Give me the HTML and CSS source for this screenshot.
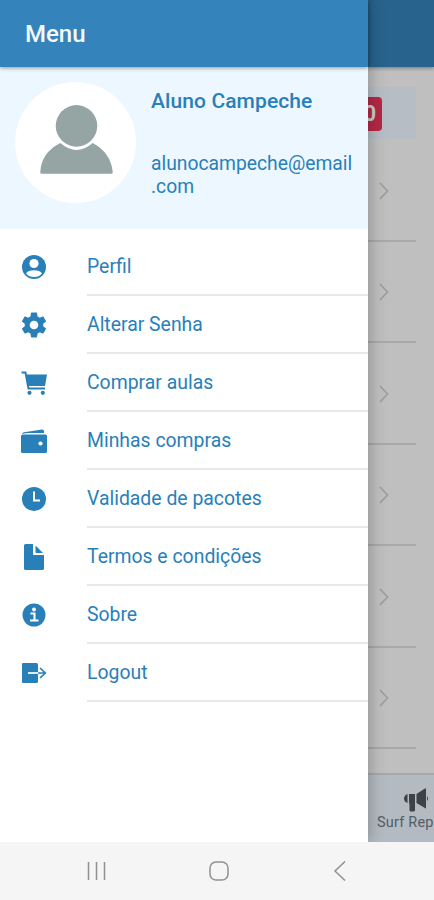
FILE: index.html
```html
<!DOCTYPE html>
<html lang="pt-BR">
  <head>
    <meta charset="UTF-8" />
    <meta name="viewport" content="width=device-width, initial-scale=1.0" />
    <title>Menu</title>
    <link rel="stylesheet" href="styles.css">
  </head>
  <body>
    <div class="app">
      <aside class="menu">
        <header class="toolbar"><h1>Menu</h1></header>
        <div class="profile">
          <svg class="avatar" viewBox="0 0 120 120">
            <circle cx="60" cy="60" r="60" fill="#fff" />
            <path d="M25 89.500Q26 70 45 60.500Q61 74.500 77 60.500Q95 70 97 89.500Q97 91 95 91H27Q25 91 25 89.500Z" />
            <circle cx="61" cy="43.500" r="22" fill="#fff" />
            <circle cx="61" cy="43.500" r="20.600" />
          </svg>
          <div class="user">
            <h2>Aluno Campeche</h2>
            <p>alunocampeche@email<br>.com</p>
          </div>
        </div>
        <ul>
          <li>
            <svg viewBox="0 0 26 26"><circle cx="13" cy="13" r="12" /><circle class="hole" cx="13" cy="9.500" r="4.600" /><path class="hole" d="M5 19.500Q7 16.200 13 16.200T21 19.500Q18 23 13 23T5 19.500Z" /></svg>
            <span>Perfil</span>
          </li>
          <li>
            <svg viewBox="1.500 1.500 21 21"><path d="M19.430 12.980c.040-.320.070-.640.070-.980s-.030-.660-.070-.980l2.110-1.650c.190-.150.240-.420.120-.640l-2-3.460c-.120-.220-.390-.300-.610-.220l-2.490 1c-.520-.400-1.080-.730-1.690-.980l-.380-2.650C14.460 2.180 14.250 2 14 2h-4c-.250 0-.460.180-.490.420l-.380 2.650c-.610.250-1.170.590-1.690.980l-2.490-1c-.230-.090-.490 0-.610.220l-2 3.460c-.130.220-.070.490.120.640l2.110 1.650c-.040.320-.070.650-.070.980s.030.660.070.980l-2.110 1.650c-.190.150-.240.420-.120.640l2 3.460c.120.220.390.300.610.220l2.490-1c.520.400 1.080.730 1.690.980l.380 2.650c.030.240.240.420.490.420h4c.250 0 .460-.180.490-.420l.380-2.650c.610-.250 1.170-.590 1.690-.980l2.490 1c.230.090.490 0 .610-.220l2-3.460c.120-.220.070-.490-.120-.640z" /><circle class="hole" cx="12" cy="12" r="3.500" /></svg>
            <span>Alterar Senha</span>
          </li>
          <li>
            <svg viewBox="0 0 26 26"><path d="M5 4.500H26L24 16H7Z" /><path class="line" d="M.5 2.500H4.500L7.500 18.500H24" /><circle cx="8.500" cy="22.800" r="2.100" /><circle cx="21.800" cy="22.800" r="2.100" /></svg>
            <span>Comprar aulas</span>
          </li>
          <li>
            <svg viewBox="0 0 26 26"><path d="M1 6Q1 4.700 3 4.300L21 1.500Q23 1.300 23 3V5H8Q4 5 1 6Z" /><path d="M2 6.500H24.500Q26 6.500 26 8V23.500Q26 25 24.500 25H1.500Q0 25 0 23.500V8Q0 6.800 2 6.500Z" /><circle class="hole" cx="19.500" cy="15.500" r="2.100" /></svg>
            <span>Minhas compras</span>
          </li>
          <li>
            <svg viewBox="0 0 26 26"><circle cx="13" cy="13" r="12" /><path class="line cut" d="M13 5.500V14.500H19" /></svg>
            <span>Validade de pacotes</span>
          </li>
          <li>
            <svg viewBox="0 0 26 26"><path d="M4.500 0H12V10Q12 11 13 11H23V24.500Q23 26 21.500 26H4.500Q3 26 3 24.500V1.500Q3 0 4.500 0Z" /><path d="M14.500 1.500V8Q14.500 9 15.500 9H22Z" /></svg>
            <span>Termos e condições</span>
          </li>
          <li>
            <svg viewBox="0 0 26 26"><circle cx="13" cy="13" r="11.500" /><circle class="hole" cx="13" cy="7.500" r="1.900" /><path class="line cut" d="M9.500 11.500H13.500V18.500M9 18.500H17.500" /></svg>
            <span>Sobre</span>
          </li>
          <li>
            <svg viewBox="0 0 26 26"><path d="M2 3H15.500Q17 3 17 4.500V21.500Q17 23 15.500 23H2Q1 23 1 22V4Q1 3 2 3Z" /><path class="line cut thin" d="M7 13H17" /><path class="line thin" d="M17 13H24M19 8L24.300 13L19 18" /></svg>
            <span>Logout</span>
          </li>
        </ul>
      </aside>

      <main class="page">
        <header class="toolbar"></header>
        <div class="balance"><b>0</b></div>
        <div class="rows">
          <div class="row"><svg viewBox="0 0 10 18"><path d="M1 1L8.500 9L1 17" /></svg></div>
          <div class="row"><svg viewBox="0 0 10 18"><path d="M1 1L8.500 9L1 17" /></svg></div>
          <div class="row"><svg viewBox="0 0 10 18"><path d="M1 1L8.500 9L1 17" /></svg></div>
          <div class="row"><svg viewBox="0 0 10 18"><path d="M1 1L8.500 9L1 17" /></svg></div>
          <div class="row"><svg viewBox="0 0 10 18"><path d="M1 1L8.500 9L1 17" /></svg></div>
          <div class="row"><svg viewBox="0 0 10 18"><path d="M1 1L8.500 9L1 17" /></svg></div>
        </div>
        <div class="tab">
          <svg viewBox="0 0 24 24"><path d="M3.500 6V15Q0 13.500 0 10.500T3.500 6ZM5 6H11V22Q11 23.500 9.500 23.500H7Q5.500 23.500 5.500 22V15.500H5ZM12.500 6L21 .5Q22 0 22 1V20Q22 21 21 20L12.500 15ZM23 8Q24 9 24 10.500T23 13Z" /></svg>
          <span>Surf Rep</span>
        </div>
      </main>
    </div>

    <!-- android buttons -->
    <nav class="android">
      <svg viewBox="0 0 20 20"><path d="M1.500 1V19M9.500 1V19M17.500 1V19" /></svg>
      <svg viewBox="0 0 20 20"><rect x="1" y="1" width="18" height="18" rx="6" /></svg>
      <svg viewBox="0 0 20 20"><path d="M15 .5L5 10L15 19.500" /></svg>
    </nav>
  </body>
</html>
```
FILE: styles.css
```css
* {
  margin: 0;
  padding: 0;
  box-sizing: border-box;
}
body {
  width: 434px;
  height: 900px;
  overflow: hidden;
  font-family: Roboto, "Liberation Sans", sans-serif;
  color: #2980b9;
  background-color: #fff;
}
.app {
  display: flex;
  height: 842px;
  overflow: hidden;
}
.menu {
  position: relative;
  z-index: 1;
  flex: none;
  width: 367.5px;
  background-color: #fff;
  box-shadow: 0 0 16px rgba(0, 0, 0, 0.3);
}
.toolbar {
  position: relative;
  display: flex;
  align-items: center;
  height: 67px;
  padding-left: 25px;
  background-color: #3483ba;
  box-shadow: 0 1px 4px rgba(0, 0, 0, 0.4);
}
.toolbar h1 {
  font-size: 24px;
  font-weight: 500;
  color: #f3f8fc;
}
.profile {
  display: flex;
  gap: 15px;
  height: 162px;
  padding: 15px 0 0 15px;
  background-color: #edf7ff;
}
.avatar {
  width: 121px;
  height: 121px;
  fill: #95a5a4;
}
.user {
  padding-top: 6px;
}
.user h2 {
  font-size: 21px;
  line-height: 26px;
  font-weight: 500;
  letter-spacing: 0.1px;
}
.user p {
  padding-top: 38px;
  font-size: 19.3px;
  line-height: 23px;
}
.menu ul {
  padding-top: 9px;
  list-style: none;
}
.menu li {
  display: flex;
  align-items: center;
  gap: 40px;
  height: 58px;
  padding-left: 21px;
}
.menu li svg {
  flex: none;
  width: 26px;
  height: 26px;
  fill: #2980b9;
}
.menu li .hole {
  fill: #fff;
}
.menu li .line {
  fill: none;
  stroke: #2980b9;
  stroke-width: 2;
}
.menu li .cut {
  stroke: #fff;
}
.menu li .thin {
  stroke-width: 1.7;
}
.menu li span {
  flex: 1;
  height: 58px;
  line-height: 58px;
  font-size: 19.4px;
  border-bottom: 2px solid #e8e8e8;
}
.page {
  display: flex;
  flex-direction: column;
  width: 66.5px;
  background-color: #bfbfbf;
}
.page .toolbar {
  background-color: #27638c;
}
.balance {
  width: 48px;
  height: 52px;
  margin-top: 20px;
  padding-top: 10px;
  background-color: #b6bdc5;
}
.balance b {
  display: block;
  width: 14px;
  height: 34px;
  line-height: 33px;
  font-size: 22px;
  font-weight: 700;
  text-indent: -4px;
  color: #ccc;
  background-color: #b52745;
  border-radius: 0 4px 4px 0;
}
.rows {
  width: 48px;
  padding-top: 1px;
}
.row {
  display: flex;
  align-items: center;
  height: 101.5px;
  padding: 2px 0 0 11px;
  border-bottom: 2px solid #a9a9a9;
}
.row svg {
  width: 10px;
  height: 18px;
  fill: none;
  stroke: #98a0a5;
  stroke-width: 1.8;
}
.tab {
  display: flex;
  flex-direction: column;
  flex: none;
  height: 69px;
  margin-top: auto;
  padding: 13px 0 0 9.5px;
  font-size: 14.5px;
  line-height: 22px;
  letter-spacing: 0.2px;
  white-space: nowrap;
  color: #555d64;
  background-color: #b3bac1;
  border-top: 2px solid #a5a9ad;
}
.tab svg {
  width: 24px;
  height: 24px;
  margin-left: 27px;
  fill: #3c4247;
}
.android {
  display: flex;
  align-items: center;
  justify-content: space-between;
  height: 58px;
  padding: 0 84px 0 87px;
  background-color: #f5f5f5;
}
.android svg {
  width: 20px;
  height: 20px;
  fill: none;
  stroke: #919191;
  stroke-width: 1.5;
}
```
